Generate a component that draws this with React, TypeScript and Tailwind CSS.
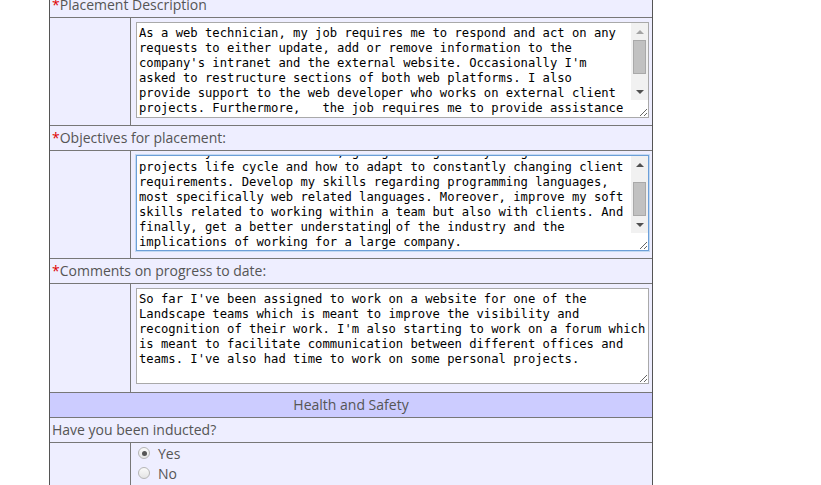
import { useEffect, useRef } from "react";

const placement = [
  "As a web technician, my job requires me to respond and act on any",
  "requests to either update, add or remove information to the",
  "company's intranet and the external website. Occasionally I'm",
  "asked to restructure sections of both web platforms. I also",
  "provide support to the web developer who works on external client",
  "projects. Furthermore,   the job requires me to provide assistance",
  "to the marketing team when they need to publish new content on the",
  "website or update existing pages, and to help colleagues with any",
  "technical issues they may encounter during their daily work, such",
  "as access rights, broken links or outdated documents.",
].join("\n");

const objectives = [
  "To develop my technical knowledge and gain a better understanding",
  "of the way a web team works, going through every stage of a",
  "projects life cycle and how to adapt to constantly changing client",
  "requirements. Develop my skills regarding programming languages,",
  "most specifically web related languages. Moreover, improve my soft",
  "skills related to working within a team but also with clients. And",
  "finally, get a better understating of the industry and the",
  "implications of working for a large company.",
  "I would also like to improve my time management and learn how to",
  "prioritise tasks when working on several projects at the same",
  "time.",
].join("\n");

const comments = [
  "So far I've been assigned to work on a website for one of the",
  "Landscape teams which is meant to improve the visibility and",
  "recognition of their work. I'm also starting to work on a forum which",
  "is meant to facilitate communication between different offices and",
  "teams. I've also had time to work on some personal projects.",
].join("\n");

function Label({ text, required = true }: { text: string; required?: boolean }) {
  return (
    <div className="h-[25px] border-b border-[#777] pl-[2px] leading-[24px] text-[14px] text-[#555]">
      {required && <span className="text-[#e00000]">*</span>}
      {text}
    </div>
  );
}

// classic scrollbar drawn over the textarea's right edge
function Scrollbar({ thumbTop, atTop }: { thumbTop: number; atTop: boolean }) {
  return (
    <div className="pointer-events-none absolute right-[1px] top-[1px] flex h-[77px] w-[17px] flex-col bg-[#f1f1f1]">
      <div className="flex h-[17px] items-center justify-center">
        <span
          className={
            "h-0 w-0 border-x-[4px] border-b-[4px] border-x-transparent " +
            (atTop ? "border-b-[#a3a3a3]" : "border-b-[#505050]")
          }
        />
      </div>
      <div className="flex-1 px-[2px]">
        <div
          className="h-[34px] border border-[#a9a9a9] bg-[#c1c1c1]"
          style={{ marginTop: thumbTop }}
        />
      </div>
      <div className="flex h-[17px] items-center justify-center">
        <span className="h-0 w-0 border-x-[4px] border-t-[4px] border-x-transparent border-t-[#505050]" />
      </div>
    </div>
  );
}

function AreaRow({
  value,
  scrollTop = 0,
  thumbTop = 0,
  scroll = true,
  focused = false,
  last = false,
}: {
  value: string;
  scrollTop?: number;
  thumbTop?: number;
  scroll?: boolean;
  focused?: boolean;
  last?: boolean;
}) {
  const ref = useRef<HTMLTextAreaElement>(null);
  useEffect(() => {
    if (ref.current) ref.current.scrollTop = scrollTop;
  }, [scrollTop]);

  return (
    <div className="flex border-b border-[#777]">
      <div className="w-[81px] shrink-0 border-r border-[#777]" />
      <div className={"pl-[5px] pt-[4px] " + (last ? "pb-[8px]" : "pb-[7px]")}>
        <div className="relative">
          <textarea
            ref={ref}
            readOnly
            wrap="off"
            value={value}
            className={
              "block h-[96px] w-[513px] overflow-hidden bg-white px-[2px] pt-[3px] pb-[2px] font-['DejaVu_Sans_Mono',monospace] text-[12.2px] leading-[15px] text-black outline-none " +
              (focused
                ? "border border-[#6c9fd8] shadow-[0_0_0_1px_#c3d9f2]"
                : "border border-[#a9a9a9]")
            }
          />
          {scroll && <Scrollbar thumbTop={thumbTop} atTop={scrollTop === 0} />}
          {focused && (
            <span className="pointer-events-none absolute left-[253px] top-[64px] h-[15px] w-px bg-black" />
          )}
        </div>
      </div>
    </div>
  );
}

export default function App() {
  return (
    <div className="min-h-[485px] overflow-hidden bg-white font-['Open_Sans',sans-serif]">
      <div className="ml-[49px] -mt-[7px] w-[604px] border-x border-[#555] bg-[#eeeeff]">
        <Label text="Placement Description" />
        <AreaRow value={placement} />

        <Label text="Objectives for placement:" />
        <AreaRow value={objectives} scrollTop={29} thumbTop={9} focused />

        <Label text="Comments on progress to date:" />
        <AreaRow value={comments} scroll={false} last />

        <div className="h-[25px] border-b border-[#777] bg-[#ccccff] text-center leading-[24px] text-[14px] text-[#555]">
          Health and Safety
        </div>
        <Label text="Have you been inducted?" required={false} />

        <div className="flex">
          <div className="w-[81px] shrink-0 border-r border-[#777]" />
          <div className="flex flex-col pl-[7px] pb-[10px] text-[14px] text-[#555]">
            {["Yes", "No"].map((opt) => (
              <label key={opt} className="flex h-[20px] items-center gap-[8px]">
                <span className="flex h-[12px] w-[12px] items-center justify-center rounded-full border border-[#b5b5b5] bg-[linear-gradient(#fafafa,#e4e4e4)]">
                  {opt === "Yes" && <span className="h-[5px] w-[5px] rounded-full bg-[#555]" />}
                </span>
                {opt}
              </label>
            ))}
          </div>
        </div>
      </div>
    </div>
  );
}
